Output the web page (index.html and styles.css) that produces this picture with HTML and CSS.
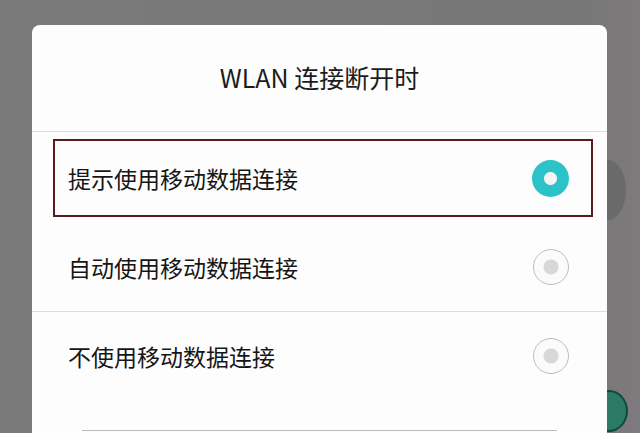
FILE: index.html
```html
<!DOCTYPE html>
<html lang="zh">
<head>
<meta charset="utf-8">
<link rel="stylesheet" href="styles.css">
</head>
<body>
<div class="screen">
  <div class="bg-knob"></div>
  <div class="bg-green"></div>
  <div class="dialog">
    <div class="title">WLAN 连接断开时</div>
    <div class="divider"></div>
    <div class="options">
      <div class="row row-selected">
        <span class="label">提示使用移动数据连接</span>
        <span class="radio radio-on"></span>
      </div>
      <div class="row row-plain">
        <span class="label">自动使用移动数据连接</span>
        <span class="radio"></span>
      </div>
    </div>
    <div class="divider"></div>
    <div class="row row-last">
      <span class="label">不使用移动数据连接</span>
      <span class="radio"></span>
    </div>
    <div class="footer-line"></div>
  </div>
</div>
</body>
</html>
```

FILE: styles.css
```css
html, body {
  margin: 0;
  padding: 0;
}
body {
  width: 640px;
  height: 433px;
  overflow: hidden;
  background: #787878;
  font-family: "Noto Sans CJK SC", "Noto Sans", sans-serif;
}
.screen {
  position: relative;
  width: 640px;
  height: 433px;
  overflow: hidden;
  background: linear-gradient(90deg, #7a7a7a 0%, #777 90%, #7e7a7d 100%);
  padding-top: 25px;
  box-sizing: border-box;
}
.bg-knob {
  position: absolute;
  left: 590px;
  top: 160px;
  width: 36px;
  height: 60px;
  border-radius: 50%;
  background: #6a6a6a;
}
.bg-green {
  position: absolute;
  left: 590px;
  top: 390px;
  width: 34px;
  height: 38px;
  border-radius: 50%;
  background: #2a7a66;
  border: 2px solid #0f4a3a;
}
.dialog {
  position: relative;
  margin-left: 32px;
  width: 575px;
  height: 430px;
  background: #fdfdfd;
  border-radius: 8px 8px 0 0;
  display: flex;
  flex-direction: column;
}
.title {
  height: 106px;
  display: flex;
  align-items: center;
  justify-content: center;
  font-size: 25px;
  color: #1c1c1c;
  padding-bottom: 2px;
  box-sizing: border-box;
}
.divider {
  height: 1px;
  background: #dcdcdc;
  flex: none;
}
.options {
  padding-top: 7px;
}
.row {
  display: flex;
  align-items: center;
  justify-content: space-between;
  box-sizing: border-box;
}
.label {
  font-size: 23px;
  color: #161616;
}
.row-selected {
  margin: 0 14px 0 21px;
  height: 78px;
  border: 2px solid #5a1c20;
  padding: 0 22px 0 13px;
}
.row-plain {
  height: 94px;
  padding: 6px 38px 0 36px;
}
.row-last {
  height: 88px;
  padding: 0 38px 0 36px;
}
.radio {
  width: 36px;
  height: 36px;
  border-radius: 50%;
  box-sizing: border-box;
  border: 1.5px solid #bdbdbd;
  background: radial-gradient(circle, #d8d8d8 0 7px, #fbfbfb 8px);
  flex: none;
}
.radio-on {
  border: none;
  background: radial-gradient(circle, #f4f4f4 0 6px, #2bc2c8 7px);
  width: 37px;
  height: 37px;
}
.footer-line {
  margin: 30px 50px 0 50px;
  height: 1px;
  background: #bbb;
}
```
